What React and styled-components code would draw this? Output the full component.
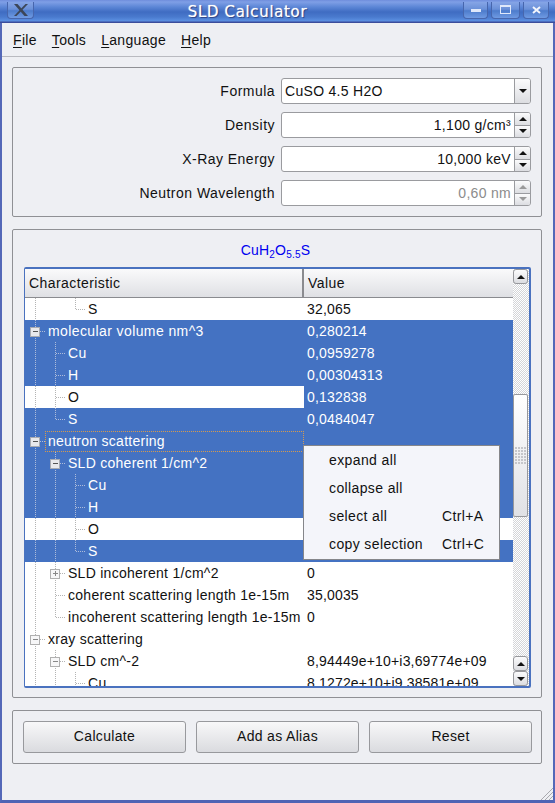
import React from "react";
import styled, { createGlobalStyle, css } from "styled-components";

const Global = createGlobalStyle`
  html, body { margin: 0; padding: 0; background: #eeeff3; }
  body { width: 555px; height: 803px; overflow: hidden; font-family: "Liberation Sans", Arial, sans-serif; font-size: 14px; color: #111; }
  * { box-sizing: border-box; }
`;

const Window = styled.div`
  width: 555px; height: 803px; display: flex; flex-direction: column;
  background: #eeeff3; border-left: 2px solid #5468b8; border-right: 2px solid #5468b8; border-bottom: 3px solid #4f63b4;
  position: relative;
`;
const TitleBar = styled.div`
  height: 23px; margin: 0 -2px; flex: none; display: flex; align-items: center; justify-content: space-between; padding: 0 6px 0 7px;
  background: linear-gradient(#6f8ddc 0, #7f9fe6 2px, #5c86d6 7px, #3f6cc2 12px, #4a7ace 17px, #5c90e2 21px, #3b4d9c 22px, #3b4d9c 23px);
`;
const Title = styled.div`
  flex: 1; text-align: center; color: #fff; font-family: "DejaVu Sans", sans-serif; font-size: 15px; font-weight: 400; padding-right: 2px; letter-spacing: .65px;
  text-shadow: 1px 1px 1px #2a3f80, 0 0 1px #fff;
`;
const WinBtn = styled.div`
  width: ${p => p.$w}px; height: 17px; margin-top: -3px; border: 1px solid #4766ad; border-top: none; border-radius: 0 0 4px 4px;
  display: flex; align-items: center; justify-content: center;
  background: linear-gradient(#86a5e6, #6a90d8 45%, #4d7ccc 55%, #6f9ae2);
`;
const WinGroup = styled.div`display: flex; gap: ${p => p.$gap ?? 3}px;`;

const MenuBar = styled.div`
  height: 34px; flex: none; display: flex; align-items: center; gap: 15px; padding: 0 0 0 11px; border-bottom: 1px solid #b9bac0;
`;
const MenuItem = styled.span`
  font-size: 14px; letter-spacing: .32px; color: #111;
  u { text-underline-offset: 2px; }
`;

const Content = styled.div`
  flex: 1; display: flex; flex-direction: column; padding: 10px 11px 0 10px; min-height: 0;
`;
const Panel = styled.div`
  border: 1px solid #8f9094; border-radius: 2px; flex: none;
`;
const FormPanel = styled(Panel)`
  height: 150px; display: flex; flex-direction: column; gap: 8px; padding: 10px 10px 0 0;
`;
const FormRow = styled.div`display: flex; align-items: center; height: 26px; gap: 6px;`;
const Label = styled.div`width: 262px; text-align: right; letter-spacing: .47px;`;
const Field = styled.div`
  flex: 1; height: 26px; display: flex; border: 1px solid #9a9b9f; border-radius: 3px; background: #fff; overflow: hidden;
`;
const FieldText = styled.div`
  flex: 1; padding: 0 3px; line-height: 24px; letter-spacing: .3px;
  text-align: ${p => p.$right ? "right" : "left"}; color: ${p => p.$disabled ? "#8c8c8c" : "#111"};
`;
const Stepper = styled.div`
  width: 16px; flex: none; display: flex; flex-direction: column; border-left: 1px solid #9a9b9f;
`;
const StepBtn = styled.div`
  flex: 1; display: flex; align-items: center; justify-content: center;
  background: linear-gradient(#fbfbfc, #dcdde1);
  & + & { border-top: 1px solid #9a9b9f; }
`;
const Arrow = styled.span`
  width: 0; height: 0; border-left: 4px solid transparent; border-right: 4px solid transparent;
  ${p => p.$up ? css`border-bottom: 4px solid ${p.$disabled ? "#9a9a9a" : "#111"};` : css`border-top: 4px solid ${p.$disabled ? "#9a9a9a" : "#111"};`}
`;

const ResultPanel = styled(Panel)`
  margin-top: 12px; height: 469px; display: flex; flex-direction: column; padding: 0 10px 0 11px;
`;
const Formula = styled.div`
  height: 37px; flex: none; text-align: center; color: #0000f0; line-height: 40px; padding-right: 4px; letter-spacing: .2px;
  sub { font-size: 10px; line-height: 0; vertical-align: -3px; }
`;
const Tree = styled.div`
  height: 421px; flex: none; display: flex; border: 2px solid #4a72bf; border-radius: 2px; background: #fff; position: relative; overflow: hidden;
  border-left-width: 1px;
`;
const TreeMain = styled.div`flex: 1; min-width: 0; display: flex; flex-direction: column;`;
const Header = styled.div`
  height: 29px; flex: none; display: flex; border-bottom: 1px solid #8a8b8f; background: linear-gradient(#fafafb, #dfe0e4);
`;
const HeaderCell = styled.div`
  width: ${p => p.$w ? `${p.$w}px` : "auto"}; flex: ${p => p.$w ? "none" : 1}; padding-left: 4px; line-height: 28px; letter-spacing: .42px;
  border-right: ${p => p.$w ? "2px solid #8a8b8f" : "none"};
`;
const Body = styled.div`flex: 1; min-height: 0; overflow: hidden;`;
const Row = styled.div`display: flex; height: 22px;`;
const NameCell = styled.div`
  width: 279px; flex: none; display: flex; align-items: center; position: relative; white-space: nowrap;
  background: ${p => p.$sel ? "#4472c2" : "#fff"}; color: ${p => p.$sel ? "#fff" : "#111"}; letter-spacing: ${p => p.$wide ? ".4px" : ".27px"};
  ${p => p.$focus && css`&::after { content: ""; position: absolute; left: 20px; top: 1px; right: 0; bottom: 0; border: 1px dotted #d69a4c; }`}
`;
const Gutter = styled.svg`flex: none; display: block;`;
const ValueCell = styled.div`
  flex: 1; padding-left: 3px; line-height: 22px; letter-spacing: .17px; white-space: nowrap;
  background: ${p => p.$sel ? "#4472c2" : "#fff"}; color: ${p => p.$sel ? "#fff" : "#111"};
`;

const Scroll = styled.div`
  width: 16px; flex: none; display: flex; flex-direction: column; align-items: center; padding-right: 1px;
  background-color: #f4f4f6;
  background-image: conic-gradient(#d4d5d8 25%, #fff 0 50%, #d4d5d8 0 75%, #fff 0);
  background-size: 2px 2px;
`;
const ScrollBtn = styled.div`
  width: 15px; height: 15px; flex: none; border: 1px solid #97989c; border-radius: 3px; display: flex; align-items: center; justify-content: center;
  background: linear-gradient(#fbfbfc, #dcdde1);
`;
const Spacer = styled.div`flex: ${p => p.$grow}; min-height: 0;`;
const Thumb = styled.div`
  width: 15px; height: 123px; flex: none; border: 1px solid #97989c; border-radius: 2px; display: flex; align-items: center; justify-content: center;
  background: linear-gradient(#fff, #e0e1e5);
`;
const GripDots = styled.div`
  display: grid; grid-template-columns: repeat(4, 2px); grid-auto-rows: 2px; gap: 1px;
  span { background: #c5c6ca; }
`;

const PopMenu = styled.div`
  position: absolute; left: 278px; top: 176px; width: 197px; height: 115px; background: #f4f5fa; border: 1px solid #85868a;
  display: flex; flex-direction: column;
`;
const PopItem = styled.div`
  height: 28px; display: flex; align-items: center; padding: 0 0 0 25px; color: #111; letter-spacing: .38px;
`;
const PopLabel = styled.span`width: 113px; flex: none; white-space: nowrap;`;

const ButtonPanel = styled(Panel)`
  margin-top: 12px; height: 54px; display: flex; gap: 10px; padding: 10px 9px 0 10px;
`;
const Button = styled.div`
  flex: 1; height: 32px; border: 1px solid #98999d; border-radius: 3px; text-align: center; line-height: 29px; letter-spacing: .33px;
  background: linear-gradient(#f8f8f9, #dadbdf);
`;
const Resize = styled.svg`position: absolute; right: 0; bottom: 0;`;

const INDENT = 20;
function Branch({ depth, conts = [], last, box, sel }) {
  const w = 23 + INDENT * depth;
  const col = sel ? "#aebcda" : "#b4b4b4";
  const line = { stroke: col, strokeWidth: 1, strokeDasharray: "1 1", shapeRendering: "crispEdges" };
  const lx = 10.5 + INDENT * depth;
  return (
    <Gutter width={w} height={22} viewBox={`0 0 ${w} 22`}>
      {conts.map(c => <line key={c} x1={10.5 + INDENT * c} x2={10.5 + INDENT * c} y1={0} y2={22} {...line} />)}
      <line x1={lx} x2={lx} y1={0} y2={last ? 11 : 22} {...line} />
      <line x1={lx} x2={lx + 9} y1={11.5} y2={11.5} {...line} />
      {box && (
        <g shapeRendering="crispEdges">
          <rect x={lx - 5} y={7} width={9} height={9} fill={sel ? "#e9e9ec" : "#f7f7f8"} stroke={sel ? "#a9abb2" : "#b0b0b0"} />
          <line x1={lx - 3} x2={lx + 2} y1={11.5} y2={11.5} stroke={sel ? "#555" : "#888"} />
          {box === "plus" && <line x1={lx - .5} x2={lx - .5} y1={9} y2={14} stroke="#888" />}
        </g>
      )}
    </Gutter>
  );
}

const rows = [
  { n: "S", d: 2, c: [0], last: true, v: "32,065" },
  { n: "molecular volume nm^3", d: 0, box: "minus", v: "0,280214", s: true, vs: true, wide: true },
  { n: "Cu", d: 1, c: [0], v: "0,0959278", s: true, vs: true },
  { n: "H", d: 1, c: [0], v: "0,00304313", s: true, vs: true },
  { n: "O", d: 1, c: [0], v: "0,132838", vs: true },
  { n: "S", d: 1, c: [0], last: true, v: "0,0484047", s: true, vs: true },
  { n: "neutron scattering", d: 0, box: "minus", v: "", s: true, vs: true, focus: true },
  { n: "SLD coherent 1/cm^2", d: 1, c: [0], box: "minus", v: "", s: true, vs: true },
  { n: "Cu", d: 2, c: [0, 1], v: "", s: true, vs: true },
  { n: "H", d: 2, c: [0, 1], v: "", s: true, vs: true },
  { n: "O", d: 2, c: [0, 1], v: "" },
  { n: "S", d: 2, c: [0, 1], last: true, v: "", s: true, vs: true },
  { n: "SLD incoherent 1/cm^2", d: 1, c: [0], box: "plus", v: "0" },
  { n: "coherent scattering length 1e-15m", d: 1, c: [0], v: "35,0035" },
  { n: "incoherent scattering length 1e-15m", d: 1, c: [0], last: true, v: "0" },
  { n: "xray scattering", d: 0, box: "minus", v: "" },
  { n: "SLD cm^-2", d: 1, c: [0], box: "minus", v: "8,94449e+10+i3,69774e+09" },
  { n: "Cu", d: 2, c: [0, 1], v: "8,1272e+10+i9,38581e+09" },
];

const XLogo = () => (
  <svg width="16" height="14" viewBox="0 0 16 14">
    <path d="M1 1h3.500L15 13h-3.500z" fill="#3c4658" />
    <path d="M15 1h-2.500L1 13h2.500z" fill="#3c4658" />
  </svg>
);

export default function App() {
  return (
    <Window>
      <Global />
      <TitleBar>
        <WinBtn $w={27}><XLogo /></WinBtn>
        <Title>SLD Calculator</Title>
        <WinGroup $gap={3}>
          <WinBtn $w={25}><svg width="10" height="4"><rect width="10" height="3" y="1" fill="#dfe8fa" /></svg></WinBtn>
          <WinBtn $w={29}><svg width="11" height="9"><rect x=".5" y=".5" width="10" height="8" fill="none" stroke="#dfe8fa" /><rect width="11" height="2" fill="#dfe8fa" /></svg></WinBtn>
          <WinBtn $w={26}><svg width="9" height="8" viewBox="0 0 9 8"><path d="M1 1l7 6M8 1L1 7" stroke="#f2f5fc" strokeWidth="2" /></svg></WinBtn>
        </WinGroup>
      </TitleBar>
      <MenuBar>
        <MenuItem><u>F</u>ile</MenuItem>
        <MenuItem><u>T</u>ools</MenuItem>
        <MenuItem><u>L</u>anguage</MenuItem>
        <MenuItem><u>H</u>elp</MenuItem>
      </MenuBar>
      <Content>
        <FormPanel>
          <FormRow>
            <Label>Formula</Label>
            <Field><FieldText>CuSO 4.5 H2O</FieldText><Stepper><StepBtn><Arrow /></StepBtn></Stepper></Field>
          </FormRow>
          <FormRow>
            <Label>Density</Label>
            <Field><FieldText $right>1,100 g/cm³</FieldText><Stepper><StepBtn><Arrow $up /></StepBtn><StepBtn><Arrow /></StepBtn></Stepper></Field>
          </FormRow>
          <FormRow>
            <Label>X-Ray Energy</Label>
            <Field><FieldText $right>10,000 keV</FieldText><Stepper><StepBtn><Arrow $up /></StepBtn><StepBtn><Arrow /></StepBtn></Stepper></Field>
          </FormRow>
          <FormRow>
            <Label>Neutron Wavelength</Label>
            <Field><FieldText $right $disabled>0,60 nm</FieldText><Stepper><StepBtn><Arrow $up $disabled /></StepBtn><StepBtn><Arrow $disabled /></StepBtn></Stepper></Field>
          </FormRow>
        </FormPanel>
        <ResultPanel>
          <Formula>CuH<sub>2</sub>O<sub>5.5</sub>S</Formula>
          <Tree>
            <TreeMain>
              <Header>
                <HeaderCell $w={279}>Characteristic</HeaderCell>
                <HeaderCell>Value</HeaderCell>
              </Header>
              <Body>
                {rows.map((r, i) => (
                  <Row key={i}>
                    <NameCell $sel={r.s} $focus={r.focus} $wide={r.wide}>
                      <Branch depth={r.d} conts={r.c} last={r.last} box={r.box} sel={r.s} />
                      {r.n}
                    </NameCell>
                    <ValueCell $sel={r.vs}>{r.v}</ValueCell>
                  </Row>
                ))}
              </Body>
            </TreeMain>
            <Scroll>
              <ScrollBtn><Arrow $up /></ScrollBtn>
              <Spacer $grow={109} />
              <Thumb><GripDots>{Array.from({ length: 24 }, (_, i) => <span key={i} />)}</GripDots></Thumb>
              <Spacer $grow={138} />
              <ScrollBtn><Arrow $up /></ScrollBtn>
              <ScrollBtn><Arrow /></ScrollBtn>
            </Scroll>
            <PopMenu>
              <PopItem><PopLabel>expand all</PopLabel></PopItem>
              <PopItem><PopLabel>collapse all</PopLabel></PopItem>
              <PopItem><PopLabel>select all</PopLabel><span>Ctrl+A</span></PopItem>
              <PopItem><PopLabel>copy selection</PopLabel><span>Ctrl+C</span></PopItem>
            </PopMenu>
          </Tree>
        </ResultPanel>
        <ButtonPanel>
          <Button>Calculate</Button>
          <Button>Add as Alias</Button>
          <Button>Reset</Button>
        </ButtonPanel>
      </Content>
      <Resize width="14" height="14" viewBox="0 0 14 14">
        <path d="M14 2L2 14M14 6L6 14M14 10L10 14" stroke="#a8a9ae" strokeWidth="1" />
      </Resize>
    </Window>
  );
}
